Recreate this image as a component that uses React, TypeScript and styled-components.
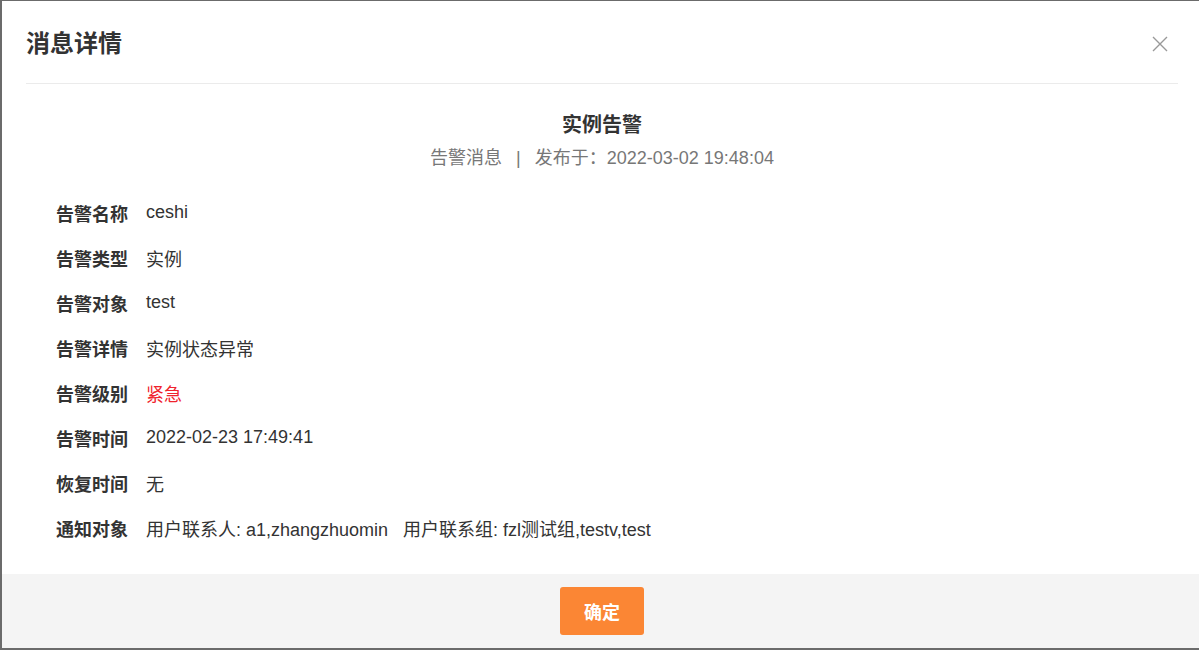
import React from 'react'
import styled, { createGlobalStyle } from 'styled-components'

const GlobalStyle = createGlobalStyle`
  html, body {
    margin: 0;
    padding: 0;
    background: #6b6b6b;
    overflow: hidden;
  }
  body {
    font-family: 'Liberation Sans', 'Noto Sans CJK SC', sans-serif;
    color: #333;
  }
`

type Field = { label: string; value: string; danger?: boolean }

const fields: Field[] = [
  { label: '告警名称', value: 'ceshi' },
  { label: '告警类型', value: '实例' },
  { label: '告警对象', value: 'test' },
  { label: '告警详情', value: '实例状态异常' },
  { label: '告警级别', value: '紧急', danger: true },
  { label: '告警时间', value: '2022-02-23 17:49:41' },
  { label: '恢复时间', value: '无' },
  { label: '通知对象', value: '用户联系人: a1,zhangzhuomin\u00a0\u00a0\u00a0用户联系组: fzl测试组,testv,test' },
]

const App: React.FC = () => {
  return (
    <>
      <GlobalStyle />
      <Backdrop>
        <Modal>
          <Header>
            <Title>消息详情</Title>
            <CloseButton aria-label="close">
              <svg width="16" height="16" viewBox="0 0 16 16">
                <path d="M1 1L15 15M15 1L1 15" stroke="#999" strokeWidth="1.4" fill="none" />
              </svg>
            </CloseButton>
          </Header>
          <Body>
            <Heading>实例告警</Heading>
            <Meta>
              告警消息<Sep>|</Sep>发布于：2022-03-02 19:48:04
            </Meta>
            <Fields>
              {fields.map((f) => (
                <Row key={f.label}>
                  <Label>{f.label}</Label>
                  <Value $danger={f.danger}>{f.value}</Value>
                </Row>
              ))}
            </Fields>
          </Body>
          <Footer>
            <ConfirmButton>确定</ConfirmButton>
          </Footer>
        </Modal>
      </Backdrop>
    </>
  )
}

const Backdrop = styled.div({
  width: '100vw',
  height: '100vh',
  padding: '1px 0 0 2px',
  boxSizing: 'border-box',
})

const Modal = styled.div({
  width: '1200px',
  height: '647px',
  background: '#fff',
  display: 'flex',
  flexDirection: 'column',
})

const Header = styled.div({
  height: '83px',
  margin: '0 24px',
  paddingTop: '3px',
  boxSizing: 'border-box',
  borderBottom: '1px solid #ebebeb',
  display: 'flex',
  alignItems: 'center',
  justifyContent: 'space-between',
})

const Title = styled.h2({
  margin: 0,
  fontSize: '24px',
  lineHeight: '32px',
  fontWeight: 700,
  color: '#333',
})

const CloseButton = styled.button({
  border: 0,
  background: 'transparent',
  padding: 0,
  marginRight: '10px',
  width: '16px',
  height: '16px',
  display: 'flex',
  cursor: 'pointer',
})

const Body = styled.div({
  flex: 1,
  padding: '27px 0 0',
  display: 'flex',
  flexDirection: 'column',
})

const Heading = styled.h3({
  margin: 0,
  textAlign: 'center',
  fontSize: '20px',
  lineHeight: '28px',
  fontWeight: 700,
  color: '#333',
})

const Meta = styled.div({
  marginTop: '7px',
  textAlign: 'center',
  fontSize: '18px',
  lineHeight: '24px',
  color: '#777',
})

const Sep = styled.span({
  margin: '0 14px',
})

const Fields = styled.div({
  marginTop: '20px',
  padding: '0 0 0 54px',
  display: 'flex',
  flexDirection: 'column',
})

const Row = styled.div({
  height: '45px',
  display: 'flex',
  alignItems: 'center',
  gap: '18px',
})

const Label = styled.span({
  fontSize: '18px',
  fontWeight: 700,
  color: '#333',
  width: '72px',
  whiteSpace: 'nowrap',
})

const Value = styled.span<{ $danger?: boolean }>(({ $danger }) => ({
  fontSize: '18px',
  color: $danger ? '#f0232d' : '#333',
  whiteSpace: 'nowrap',
}))

const Footer = styled.div({
  height: '74px',
  background: '#f4f4f4',
  display: 'flex',
  alignItems: 'center',
  justifyContent: 'center',
})

const ConfirmButton = styled.button({
  width: '84px',
  height: '48px',
  border: 0,
  borderRadius: '3px',
  background: '#fb8634',
  color: '#fff',
  fontSize: '18px',
  fontWeight: 700,
  fontFamily: "'Liberation Sans', 'Noto Sans CJK SC', sans-serif",
  cursor: 'pointer',
})

export default App
